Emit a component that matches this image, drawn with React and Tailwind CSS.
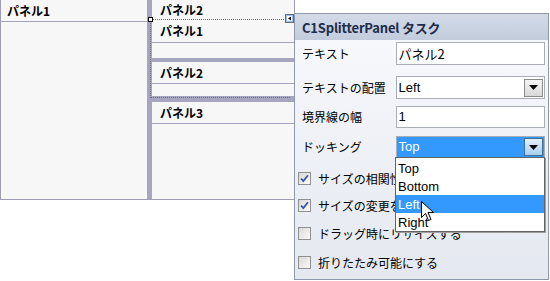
import React from "react";

const JP = { fontFamily: '"Noto Sans CJK JP", "Noto Sans", sans-serif' };
const LAT = { fontFamily: '"Liberation Sans", "Noto Sans CJK JP", sans-serif' };

function PHeader({ children, h, pl = "pl-[8px]" }) {
  return (
    <div
      className={`${h} ${pl} shrink-0 flex items-center border-b border-[#a3a3bb] text-[12px] font-bold text-black leading-none`}
      style={JP}
    >
      {children}
    </div>
  );
}

function Arrow({ active }) {
  return (
    <div
      className={`w-[19px] h-[18px] mr-[1px] flex items-center justify-center border ${
        active
          ? "border-[#3c6f9a] bg-gradient-to-b from-[#e4f1fb] to-[#a7cfee]"
          : "border-[#8b8b8b] bg-gradient-to-b from-[#f4f4f4] to-[#d9d9d9]"
      }`}
    >
      <svg width="9" height="5" viewBox="0 0 9 5">
        <path d="M0 0h9L4.5 5z" fill="#000" />
      </svg>
    </div>
  );
}

function Check({ checked }) {
  return (
    <div className="w-[13px] h-[13px] shrink-0 border border-[#8f8f8f] bg-gradient-to-br from-[#d9d9d9] to-[#fbfbfb] flex items-center justify-center">
      {checked && (
        <svg width="9" height="9" viewBox="0 0 9 9">
          <path d="M1 4.5l2.3 2.5L8 1.2" fill="none" stroke="#3a55a6" strokeWidth="1.8" />
        </svg>
      )}
    </div>
  );
}

function CheckRow({ checked, label, mt, clip }) {
  return (
    <div className={`${mt} flex items-center h-[13px] pl-[2px]`}>
      <Check checked={checked} />
      <span
        className={`ml-[7px] text-[12px] text-black whitespace-nowrap leading-none ${clip ? "w-[77px] overflow-hidden" : ""}`}
        style={JP}
      >
        {label}
      </span>
    </div>
  );
}

export default function App() {
  return (
    <div className="relative w-[550px] h-[281px] bg-white overflow-hidden">
      {/* designer surface */}
      <div className="flex w-[295px] h-[200px] border-l border-r border-b border-[#9d9db5] bg-[#f7f7f7]">
        <div className="w-[146px] flex flex-col">
          <PHeader h="h-[22px]" pl="pl-[6px]">パネル1</PHeader>
        </div>
        <div className="w-[5px] bg-[#a6a6c0]" />
        <div className="flex-1 flex flex-col">
          <div className="h-[20px] shrink-0 flex items-center pl-[8px] text-[12px] font-bold leading-none" style={JP}>
            パネル2
          </div>
          <PHeader h="h-[23px]">パネル1</PHeader>
          <div className="h-[15px] shrink-0" />
          <div className="h-[4px] shrink-0 bg-[#a6a6c0]" />
          <PHeader h="h-[22px]">パネル2</PHeader>
          <div className="h-[12px] shrink-0" />
          <div className="h-[6px] shrink-0 bg-[#a6a6c0]" />
          <PHeader h="h-[22px]">パネル3</PHeader>
          <div className="flex-1" />
        </div>
      </div>

      {/* selection outline */}
      <div className="absolute left-[150px] top-[19px] w-[140px] h-[79px] border-l border-t border-b border-dotted border-[#6e6e6e]" />
      <div className="absolute left-[148px] top-[17px] w-[5px] h-[5px] border border-black bg-white" />
      {/* smart tag glyph */}
      <div className="absolute left-[285px] top-[14px] w-[9px] h-[9px] border border-[#6d6d6d] bg-white flex items-center justify-center">
        <svg width="7" height="7" viewBox="0 0 7 7">
          <rect x="0.5" y="0.5" width="6" height="6" fill="none" stroke="#3a7de0" strokeDasharray="1 1" />
          <path d="M5 1.5v4L2 3.5z" fill="#000" />
        </svg>
      </div>

      {/* smart tag panel */}
      <div className="absolute left-[294px] top-[13px] w-[255px] h-[267px] border border-[#8e99ae] bg-gradient-to-b from-[#f9fafd] to-[#e4e8f0] flex flex-col">
        <div className="h-[26px] shrink-0 bg-gradient-to-b from-[#d3dbe8] to-[#c2ccdc] flex items-center pl-[7px]">
          <span className="text-[13px] font-bold text-[#1e2d4c] leading-none tracking-[-0.2px]" style={JP}>
            C1SplitterPanel タスク
          </span>
        </div>

        <div className="flex flex-col pl-[7px] pr-[3px]">
          <div className="mt-[2px] h-[23px] flex items-center">
            <span className="w-[94px] text-[12px] leading-none" style={JP}>テキスト</span>
            <div className="w-[150px] h-[23px] border border-[#a9adb5] bg-white flex items-center pl-[2px] text-[13px]" style={JP}>
              パネル2
            </div>
          </div>
          <div className="mt-[11px] h-[23px] flex items-center">
            <span className="w-[94px] text-[12px] leading-none" style={JP}>テキストの配置</span>
            <div className="w-[150px] h-[23px] border border-[#a9adb5] bg-white flex items-center justify-between">
              <span className="pl-[2px] text-[13px]" style={LAT}>Left</span>
              <Arrow />
            </div>
          </div>
          <div className="mt-[7px] h-[22px] flex items-center">
            <span className="w-[94px] text-[12px] leading-none" style={JP}>境界線の幅</span>
            <div className="w-[150px] h-[22px] border border-[#a9adb5] bg-white flex items-center pl-[2px] text-[13px]" style={LAT}>
              1
            </div>
          </div>
          <div className="mt-[8px] h-[22px] flex items-center">
            <span className="w-[94px] text-[12px] leading-none" style={JP}>ドッキング</span>
            <div className="w-[150px] h-[22px] border border-[#a9adb5] bg-[#3399ff] flex items-center justify-between">
              <span className="pl-[2px] text-[13px] text-white" style={LAT}>Top</span>
              <Arrow active />
            </div>
          </div>
        </div>

        <div className="flex flex-col pl-[1px]">
          <CheckRow mt="mt-[14px]" checked clip label="サイズの相関性を保持する" />
          <CheckRow mt="mt-[14px]" checked clip label="サイズの変更を許可する" />
          <CheckRow mt="mt-[15px]" label="ドラッグ時にリサイズする" />
          <CheckRow mt="mt-[16px]" label="折りたたみ可能にする" />
        </div>
      </div>

      {/* dropdown list */}
      <div className="absolute left-[395px] top-[157px] w-[150px] h-[75px] border border-[#646464] bg-white pt-[1px] shadow-[1px_1px_0_#a0a0a0] flex flex-col text-[13px] leading-none" style={LAT}>
        <div className="h-[18px] flex items-center pl-[2px]">Top</div>
        <div className="h-[18px] flex items-center pl-[2px]">Bottom</div>
        <div className="h-[18px] flex items-center pl-[2px] bg-[#3399ff] text-white">Left</div>
        <div className="h-[18px] flex items-center pl-[2px]">Right</div>
      </div>

      {/* cursor */}
      <svg className="absolute left-[421px] top-[201px]" width="13" height="21" viewBox="0 0 13 21">
        <path d="M0.5 0.5v16l4-4 3 7 2.5-1-3-7h5.5z" fill="#fff" stroke="#000" strokeWidth="1" strokeLinejoin="miter" />
      </svg>
    </div>
  );
}
